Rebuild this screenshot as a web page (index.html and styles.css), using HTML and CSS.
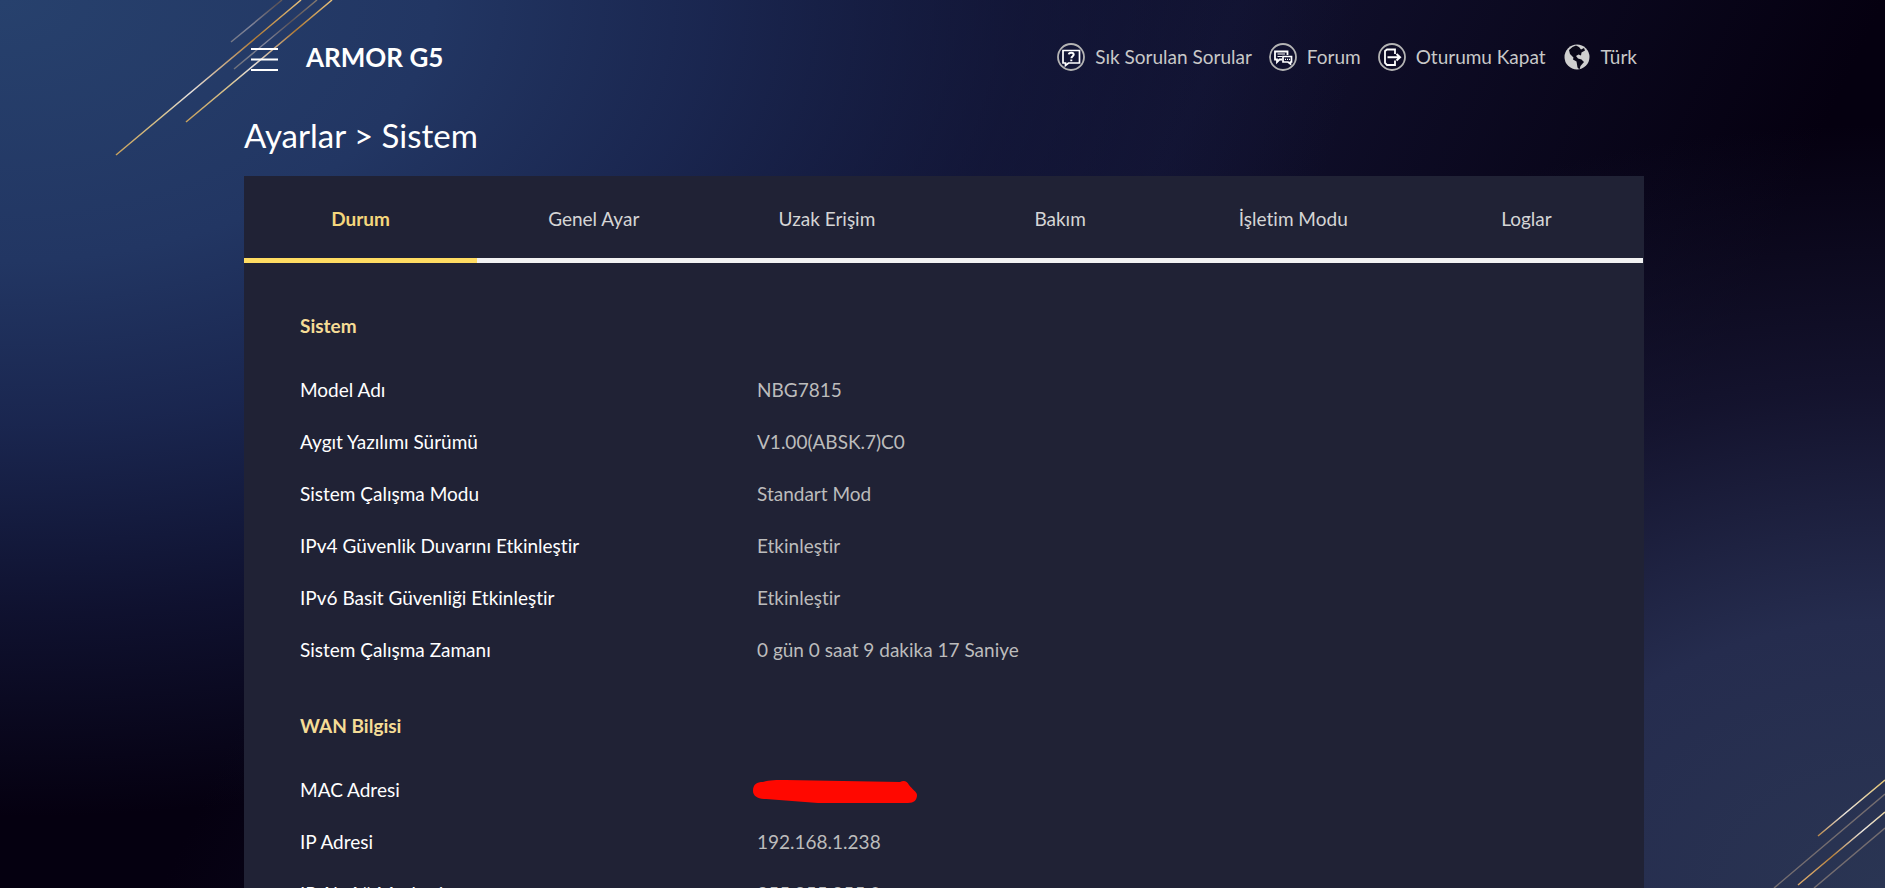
FILE: index.html
```
<!DOCTYPE html>
<html lang="tr">
<head>
    <meta charset="UTF-8">
    <meta name="viewport" content="width=device-width, initial-scale=1.0">
    <title>ARMOR G5</title>
    <link rel="stylesheet" href="styles.css">
</head>
<body>
    <!-- Decorative lines -->
    <svg class="lines lines-top" width="340" height="160" viewBox="0 0 340 160" aria-hidden="true">
        <defs>
            <linearGradient id="gold" gradientUnits="userSpaceOnUse" x1="116" y1="155" x2="301" y2="0">
                <stop offset="0" stop-color="#c9a25c"/>
                <stop offset="0.25" stop-color="#d9c48f"/>
                <stop offset="0.4" stop-color="#e8e2de"/>
                <stop offset="0.75" stop-color="#b07a35"/>
                <stop offset="1" stop-color="#e8c27c"/>
            </linearGradient>
            <linearGradient id="gold-short" gradientUnits="userSpaceOnUse" x1="186" y1="122" x2="332" y2="0">
                <stop offset="0" stop-color="#c9a25c"/>
                <stop offset="0.3" stop-color="#d9c48f"/>
                <stop offset="0.45" stop-color="#e8e2de"/>
                <stop offset="0.75" stop-color="#b07a35"/>
                <stop offset="1" stop-color="#e8c27c"/>
            </linearGradient>
            <linearGradient id="grey" gradientUnits="userSpaceOnUse" x1="230" y1="70" x2="316" y2="0">
                <stop offset="0" stop-color="#6e6f76"/>
                <stop offset="0.4" stop-color="#7f849a"/>
                <stop offset="0.7" stop-color="#5b5358"/>
                <stop offset="1" stop-color="#83796f"/>
            </linearGradient>
        </defs>
        <path d="M116 155 L301 0" stroke="url(#gold)"/>
        <path d="M186 122 L332 0" stroke="url(#gold-short)"/>
        <path d="M231 42 L282 0 M234 69 L317 0" stroke="url(#grey)"/>
    </svg>
    <svg class="lines lines-bottom" width="120" height="110" viewBox="0 0 120 110" aria-hidden="true">
        <defs>
            <linearGradient id="gold2" gradientUnits="userSpaceOnUse" x1="40" y1="90" x2="120" y2="10">
                <stop offset="0" stop-color="#d6a566"/>
                <stop offset="0.25" stop-color="#b5803d"/>
                <stop offset="0.6" stop-color="#ece6df"/>
                <stop offset="1" stop-color="#e3c578"/>
            </linearGradient>
        </defs>
        <path d="M53 58 L120 2 M33 107 L120 34" stroke="url(#gold2)"/>
        <path d="M9 110 L120 16 M49 110 L120 50" stroke="#746d70"/>
    </svg>

    <div class="page">
        <header class="header">
            <button class="menu-button" type="button" aria-label="Menü">
                <svg width="28" height="30" viewBox="0 0 28 30"><path d="M0 7h27M0 17.500h27M0 28h27" stroke="#fff" stroke-width="2.2"/></svg>
            </button>
            <h1 class="brand">ARMOR G5</h1>
            <nav class="header-links">
                <a href="#">
                    <svg class="icon" width="28" height="28" viewBox="0 0 28 28">
                        <circle cx="14" cy="14" r="13" stroke="#b4b4b4" stroke-width="1.8"/>
                        <path d="M6 7.500h16.500v12.500h-11l-3 2.500v-2.500H6z" stroke="#fff" stroke-width="1.700"/>
                        <path d="M11.800 11.300c.2-2.200 4.900-2.200 4.900.3 0 1.700-2.200 1.500-2.300 3.600M14.300 16.600v1.700" stroke="#fff" stroke-width="2"/>
                    </svg>
                    <span>Sık Sorulan Sorular</span>
                </a>
                <a href="#">
                    <svg class="icon" width="28" height="28" viewBox="0 0 28 28">
                        <circle cx="14" cy="14" r="13" stroke="#b4b4b4" stroke-width="1.8"/>
                        <path d="M13 16.500h-2.500L8 19v-2.500H6V8.500h12.500v3.500" stroke="#fff" stroke-width="1.800"/>
                        <path d="M8.500 11h7.500M8.500 13.500h4.500" stroke="#fff" stroke-width="1.200"/>
                        <path d="M14 13.500h8.500v5.500h-1v2l-2.500-2h-5z" stroke="#fff" stroke-width="1.700"/>
                        <path d="M16 16.300h5" stroke="#fff" stroke-width="1.200" stroke-dasharray="1 1"/>
                    </svg>
                    <span>Forum</span>
                </a>
                <a href="#">
                    <svg class="icon" width="28" height="28" viewBox="0 0 28 28">
                        <circle cx="14" cy="14" r="13" stroke="#b4b4b4" stroke-width="1.8"/>
                        <path d="M17 11V6.500H9L7 8v12l2 2h8v-4.500" stroke="#fff" stroke-width="1.800"/>
                        <path d="M9.500 14.200h12M18.500 11l3.500 3.200-3.500 3.200" stroke="#fff" stroke-width="2"/>
                    </svg>
                    <span>Oturumu Kapat</span>
                </a>
                <a href="#">
                    <svg class="icon" width="28" height="28" viewBox="0 0 28 28">
                        <circle cx="14" cy="14" r="12.500" fill="#cfcfcf"/>
                        <path d="M13 2.500 9.500 4 6 7l1 4 3.500 3.500-.5 2 3.500 2 1 6 2 2 1-3.500 3.500-4-2.500-2.500-3.500-1-2-2.500 2.500-1.500 2.500 1 .5-3 3.500-2-1-2.500-3 1.500-2-2.500z" fill="#090718"/>
                    </svg>
                    <span>Türk</span>
                </a>
            </nav>
        </header>

        <h2 class="breadcrumb">Ayarlar &gt; Sistem</h2>

        <main class="panel">
            <nav class="tabs">
                <a class="tab active" href="#">Durum</a>
                <a class="tab" href="#">Genel Ayar</a>
                <a class="tab" href="#">Uzak Erişim</a>
                <a class="tab" href="#">Bakım</a>
                <a class="tab" href="#">İşletim Modu</a>
                <a class="tab" href="#">Loglar</a>
            </nav>

            <section class="section">
                <h3>Sistem</h3>
                <dl>
                    <div class="row"><dt>Model Adı</dt><dd>NBG7815</dd></div>
                    <div class="row"><dt>Aygıt Yazılımı Sürümü</dt><dd>V1.00(ABSK.7)C0</dd></div>
                    <div class="row"><dt>Sistem Çalışma Modu</dt><dd>Standart Mod</dd></div>
                    <div class="row"><dt>IPv4 Güvenlik Duvarını Etkinleştir</dt><dd>Etkinleştir</dd></div>
                    <div class="row"><dt>IPv6 Basit Güvenliği Etkinleştir</dt><dd>Etkinleştir</dd></div>
                    <div class="row"><dt>Sistem Çalışma Zamanı</dt><dd>0 gün 0 saat 9 dakika 17 Saniye</dd></div>
                </dl>
            </section>

            <section class="section">
                <h3>WAN Bilgisi</h3>
                <dl>
                    <div class="row">
                        <dt>MAC Adresi</dt>
                        <dd>
                            <svg class="redaction" width="166" height="26" viewBox="0 0 166 26">
                                <path d="M1 14C1 7 5 5 11 5 18 3 24 3 34 3L148 5c4-2 7-1 9 3 3 4 8 7 8 10 0 5-3 8-9 8H66L14 22C6 22 1 19 1 14z" fill="#ff0800"/>
                            </svg>
                        </dd>
                    </div>
                    <div class="row"><dt>IP Adresi</dt><dd>192.168.1.238</dd></div>
                    <div class="row"><dt>IP Alt Ağ Maskesi</dt><dd>255.255.255.0</dd></div>
                </dl>
            </section>
        </main>
    </div>
</body>
</html>
```
FILE: styles.css
```
* {
    box-sizing: border-box;
    margin: 0;
    padding: 0;
}

body {
    height: 100vh;
    overflow: hidden;
    padding-left: 3px;
    font-family: Lato, "Open Sans", sans-serif;
    font-size: 19px;
    font-variant-ligatures: none;
    line-height: 24px;
    color: #fff;
    background:
        radial-gradient(ellipse 72% 92% at 0 0, #27416d 0%, #223663 32%, rgba(28, 42, 86, 0.9) 52%, rgba(22, 29, 68, 0.6) 75%, rgba(12, 12, 36, 0) 100%),
        radial-gradient(ellipse 55% 86% at 100% 100%, #2a3553 0%, #252c4e 35%, rgba(26, 27, 58, 0.7) 65%, rgba(8, 4, 22, 0) 100%),
        linear-gradient(115deg, #050010 25%, #11112e 54%, #050010 82%);
}

a {
    color: inherit;
    text-decoration: none;
}

/* Decorative lines */
.lines {
    position: absolute;
    fill: none;
    stroke-width: 1.5;
}

.lines-top {
    top: 0;
    left: 0;
}

.lines-bottom {
    right: 0;
    bottom: 0;
}

.page {
    position: relative;
    max-width: 1400px;
    margin: 0 auto;
}

/* Header */
.header {
    display: flex;
    align-items: center;
    height: 114px;
    padding: 0 7px;
}

.menu-button {
    display: flex;
    border: none;
    background: none;
    cursor: pointer;
}

.brand {
    margin-left: 27px;
    font-size: 26px;
    line-height: 32px;
}

.header-links {
    display: flex;
    gap: 17px;
    margin-left: auto;
    color: #c8c8c8;
}

.header-links a {
    display: flex;
    align-items: center;
    gap: 10px;
}

.icon {
    fill: none;
}

.breadcrumb {
    height: 62px;
    font-size: 33px;
    font-weight: 400;
    line-height: 42px;
}

/* Panel */
.panel {
    padding-bottom: 40px;
    background: #202235;
}

.tabs {
    display: flex;
    margin-right: 1px;
}

.tab {
    flex: 1;
    padding: 31px 0 27px;
    border-bottom: 5px solid #f2f2f2;
    text-align: center;
    color: #d5d5d5;
}

.tab.active {
    border-color: #ffdc62;
    font-weight: 700;
    color: #f5d77c;
}

.section {
    padding: 51px 56px 0;
}

.section + .section {
    padding-top: 38px;
}

.section h3 {
    margin-bottom: 26px;
    font-size: 19px;
    color: #f5dc96;
}

.row {
    display: flex;
    align-items: center;
    height: 52px;
}

.row dt {
    width: 457px;
}

.row dd {
    color: #bcbcbc;
}

.redaction {
    display: block;
    margin-left: -5px;
}
```
